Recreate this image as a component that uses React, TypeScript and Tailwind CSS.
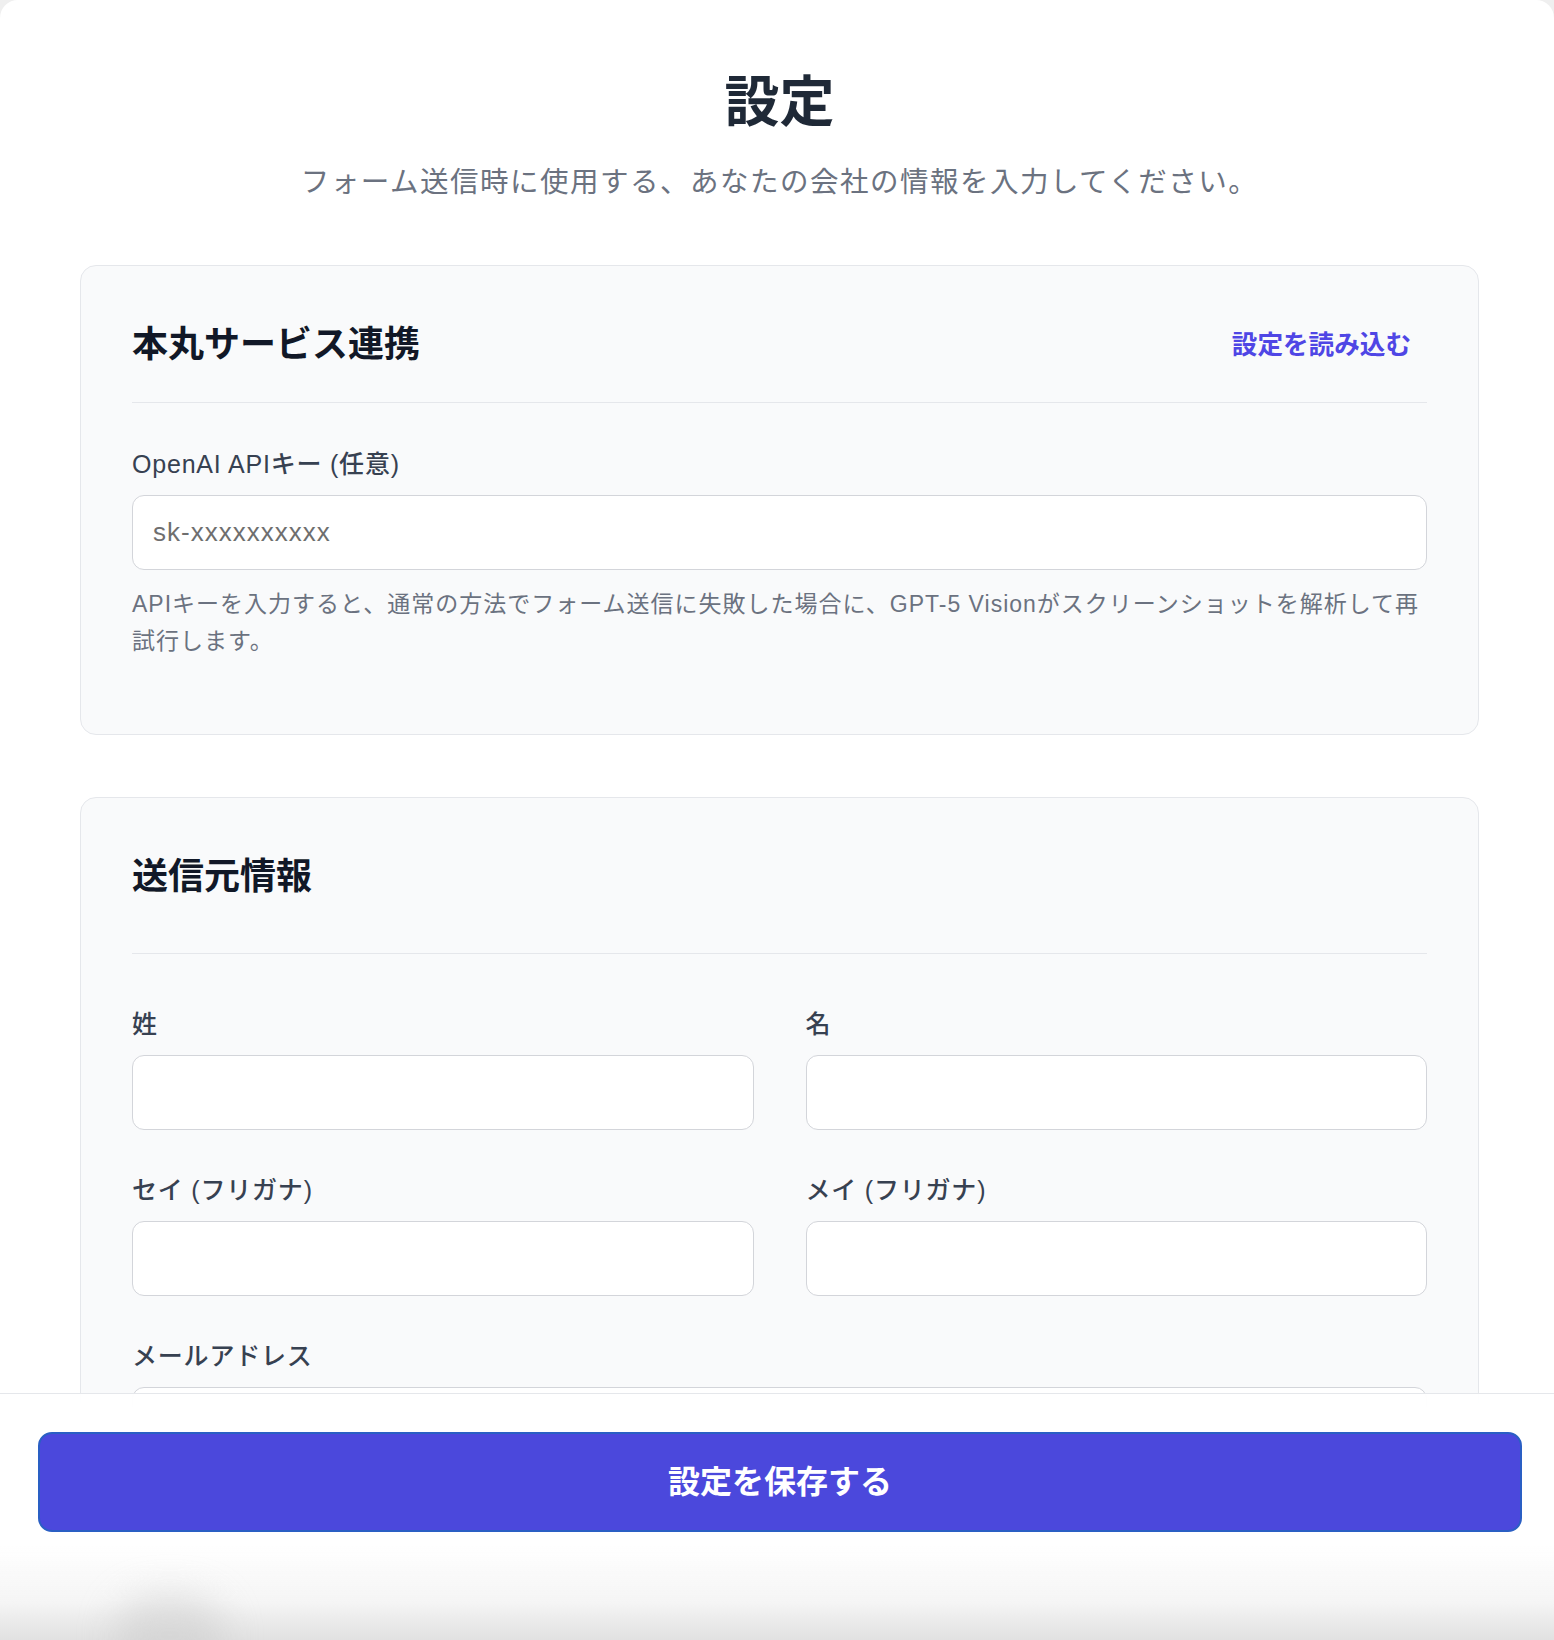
import React from "react";

const FONT = "font-['Liberation_Sans','Noto_Sans_CJK_JP',sans-serif]";

function Field({ label, placeholder }: { label: string; placeholder?: string }) {
  return (
    <div className="flex flex-col">
      <label className="mb-[13px] text-[25px] leading-[36px] font-medium tracking-[0.8px] text-[#374151]">{label}</label>
      <input
        type="text"
        placeholder={placeholder}
        className="h-[75px] w-full rounded-[12px] border-[1.5px] border-[#d3d5da] bg-white px-[20px] text-[26px] tracking-[1px] text-[#111827] outline-none placeholder:text-[#6e6e6e]"
      />
    </div>
  );
}

export default function App() {
  return (
    <div className={`relative h-[1640px] overflow-hidden bg-[#efefef] ${FONT}`}>
      <div className="min-h-full rounded-t-[18px] bg-white pt-[69px] pl-[80px] pr-[75px]">
        <h1 className="text-center text-[55px] leading-[66px] font-bold text-[#1f2937]">設定</h1>
        <p className="mt-[27px] text-center text-[28.5px] leading-[40px] tracking-[1.5px] text-[#6b7280]">
          フォーム送信時に使用する、あなたの会社の情報を入力してください。
        </p>

        {/* 本丸サービス連携 */}
        <section className="mt-[63px] rounded-[16px] border-[1.5px] border-[#e5e7eb] bg-[#f9fafb] px-[51px] pt-[57px] pb-[74px]">
          <div className="flex items-center justify-between border-b-[1.5px] border-[#e5e7eb] pb-[35px]">
            <h2 className="text-[36px] leading-[44px] font-bold text-[#111827]">本丸サービス連携</h2>
            <button type="button" className="px-[16px] text-[25.6px] leading-[36px] font-bold text-[#4f46e5]">
              設定を読み込む
            </button>
          </div>
          <div className="mt-[43px]">
            <Field label="OpenAI APIキー (任意)" placeholder="sk-xxxxxxxxxx" />
          </div>
          <p className="mt-[16px] text-[23px] leading-[37px] tracking-[1px] text-[#6b7280]">
            APIキーを入力すると、通常の方法でフォーム送信に失敗した場合に、GPT-5 Visionがスクリーンショットを解析して再試行します。
          </p>
        </section>

        {/* 送信元情報 — continues under the save bar */}
        <section className="mt-[62px] rounded-[16px] border-[1.5px] border-[#e5e7eb] bg-[#f9fafb] px-[51px] pt-[57px] pb-[300px]">
          <div className="border-b-[1.5px] border-[#e5e7eb] pb-[54px]">
            <h2 className="text-[36px] leading-[44px] font-bold text-[#111827]">送信元情報</h2>
          </div>
          <div className="mt-[52px] grid grid-cols-2 gap-x-[52px] gap-y-[42px]">
            <Field label="姓" />
            <Field label="名" />
            <Field label="セイ (フリガナ)" />
            <Field label="メイ (フリガナ)" />
            <div className="col-span-2">
              <Field label="メールアドレス" />
            </div>
          </div>
        </section>
      </div>

      {/* fixed save bar */}
      <div className="absolute inset-x-0 bottom-0 h-[247px] border-t-[1.5px] border-[#e5e7eb] bg-white/90 pt-[38px] pl-[38px] pr-[32px] backdrop-blur-md">
        <button
          type="button"
          className="h-[100px] w-full rounded-[14px] border-2 border-[#2a5fc4] bg-[#4b48dc] text-[32px] font-bold text-white"
        >
          設定を保存する
        </button>
      </div>

      {/* window shadow at the bottom edge */}
      <div className="pointer-events-none absolute inset-x-0 bottom-0 h-[95px] bg-linear-to-b from-transparent via-[#f5f5f5] via-60% to-[#e1e1e1]" />
      <div className="pointer-events-none absolute bottom-[-35px] left-[115px] h-[80px] w-[110px] rounded-full bg-[#c8c8c8]/45 blur-[18px]" />
    </div>
  );
}
